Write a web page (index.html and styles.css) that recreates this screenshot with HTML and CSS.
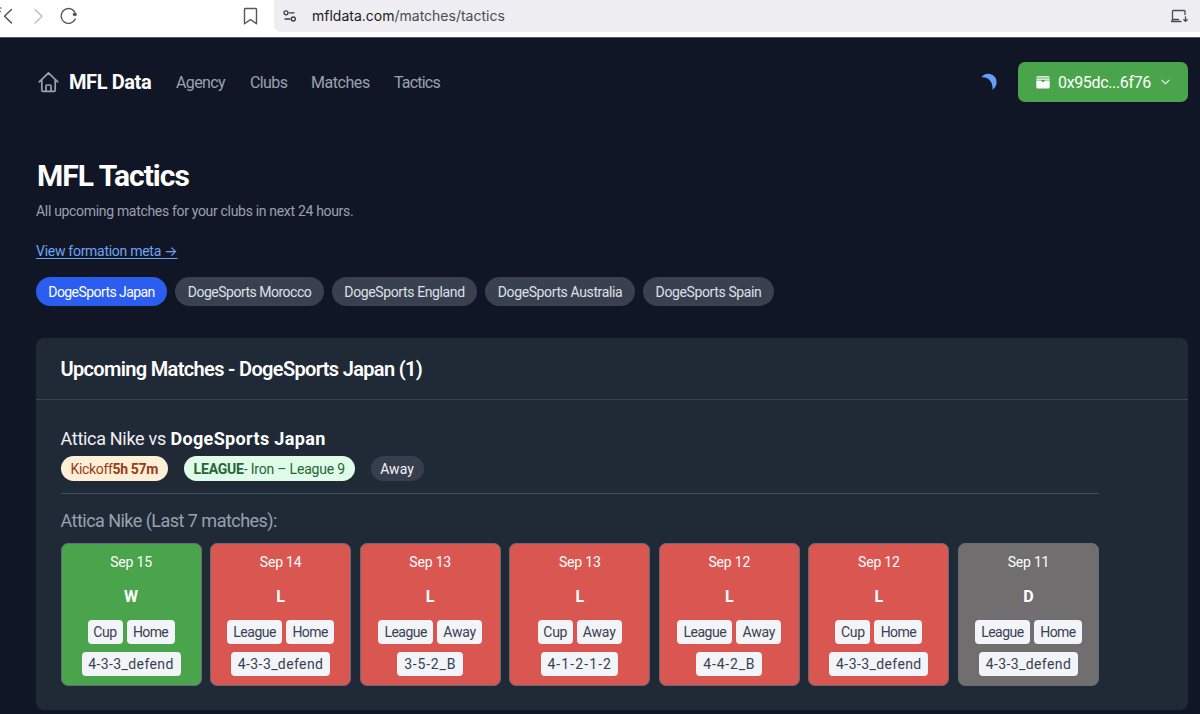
FILE: index.html
```html
<!DOCTYPE html>
<html lang="en">
<head>
<meta charset="utf-8">
<title>MFL Data</title>
<link rel="stylesheet" href="styles.css">
</head>
<body>
<div class="browser">
  <div class="browser-left">
    <svg class="tools" width="274" height="37" viewBox="0 0 274 37" fill="none" stroke-linecap="round" stroke-linejoin="round" stroke-width="1.4">
      <path d="M0 8h1M0 11.500h.5" stroke="#777"/>
      <path d="M11.500 9.500L4.500 16.300l7 6.700" stroke="#4d4d52"/>
      <path d="M35 9.500l7 6.800-7 6.700" stroke="#bdbdc0"/>
      <path d="M74.500 11.500a7.400 7.400 0 1 0 .8 7.500" stroke="#55555a"/>
      <circle cx="74.800" cy="14.300" r="2" fill="#55555a"/>
      <path d="M245 8.500h11q.5 0 .5 1v14.300l-6-4.300-6 4.300V9.500q0-1 .5-1z" stroke="#55555a"/>
    </svg>
  </div>
  <div class="address">
    <svg width="14" height="14" viewBox="0 0 14 14" fill="none" stroke="#3c3c43" stroke-width="1.300" stroke-linecap="round"><circle cx="3" cy="3.800" r="2"/><path d="M6.500 3.800H11M2 10H7"/><circle cx="10.300" cy="10" r="2"/></svg>
    <div class="url">mfldata.com<span>/matches/tactics</span></div>
    <svg class="install" width="18" height="14" viewBox="0 0 18 14" fill="none" stroke="#4a4a50" stroke-width="1.300" stroke-linecap="round" stroke-linejoin="round"><path d="M15 5.500V2.300q0-.8-.8-.8H3.300q-.8 0-.8.800V10.500L1.500 12.500H11M2.500 10.500h6"/><path d="M15.500 8v4M13.800 10.700l1.700 1.700 1.700-1.700"/></svg>
  </div>
</div>
<nav class="nav">
  <svg class="home" width="22" height="22" viewBox="0 0 22 22" fill="none" stroke="#99a1af" stroke-width="1.700" stroke-linecap="round" stroke-linejoin="round"><path d="M2.300 10.800L11.500 1.800l9.200 9M4.800 8.800v10.500q0 1 1 1h11.400q1 0 1-1V8.800M9 20v-5q0-1 1-1h3q1 0 1 1V20"/></svg>
  <div class="brand">MFL Data</div>
  <div class="link agency">Agency</div>
  <div class="link clubs">Clubs</div>
  <div class="link matches">Matches</div>
  <div class="link tactics">Tactics</div>
  <svg class="moon" width="16" height="18" viewBox="0 0 16 18"><path d="M.3 4.300C2.300 1.800 4.500.7 7.300.7c4.700 0 8.300 3.800 8.300 8.300 0 3.300-1.500 5.900-4.200 7.700C12.500 10 8 3.400.3 4.300z" fill="#659eff"/></svg>
  <div class="wallet">
    <svg width="14" height="13" viewBox="0 0 14 13"><path d="M1.500.3h11q1 0 1.200 1.200H.3Q.5.300 1.500.3zM.3 2.400h13.400v1.300H.3zM.3 4.600h4.700l1.500 1.500h1l1.500-1.500h4.700v6.400q0 1.600-1.600 1.600H1.900Q.3 12.600.3 11z" fill="#fff"/></svg>
    <div class="wallet-id">0x95dc...6f76</div>
    <svg width="9" height="6" viewBox="0 0 9 6" fill="none" stroke="#e3f2e2" stroke-width="1.100"><path d="M.7 1l3.800 3.700L8.300 1"/></svg>
  </div>
</nav>
<main class="page">
  <h1>MFL Tactics</h1>
  <p class="intro">All upcoming matches for your clubs in next 24 hours.</p>
  <a class="meta">View formation meta <span>→</span></a>
  <div class="clubs-list">
    <div class="pill active japan">DogeSports Japan</div>
    <div class="pill morocco">DogeSports Morocco</div>
    <div class="pill england">DogeSports England</div>
    <div class="pill australia">DogeSports Australia</div>
    <div class="pill spain">DogeSports Spain</div>
  </div>
  <section class="panel">
    <h2>Upcoming Matches - DogeSports Japan (1)</h2>
    <div class="match">
      <div class="versus"><span>Attica Nike vs</span> <b>DogeSports Japan</b></div>
      <div class="badges">
        <div class="badge kickoff">Kickoff<b>5h 57m</b></div>
        <div class="badge league"><b>LEAGUE</b>- Iron – League 9</div>
        <div class="badge away">Away</div>
      </div>
      <div class="recent">Attica Nike (Last 7 matches):</div>
      <div class="results">
        <div class="result win"><div>Sep 15</div><b>W</b><div class="chips"><i class="cup">Cup</i><i class="hm">Home</i></div><i class="f-long">4-3-3_defend</i></div>
        <div class="result loss"><div>Sep 14</div><b>L</b><div class="chips"><i class="lg">League</i><i class="hm">Home</i></div><i class="f-long">4-3-3_defend</i></div>
        <div class="result loss"><div>Sep 13</div><b>L</b><div class="chips"><i class="lg">League</i><i class="aw">Away</i></div><i class="f-short">3-5-2_B</i></div>
        <div class="result loss"><div>Sep 13</div><b>L</b><div class="chips"><i class="cup">Cup</i><i class="aw">Away</i></div><i class="f-mid">4-1-2-1-2</i></div>
        <div class="result loss"><div>Sep 12</div><b>L</b><div class="chips"><i class="lg">League</i><i class="aw">Away</i></div><i class="f-short">4-4-2_B</i></div>
        <div class="result loss"><div>Sep 12</div><b>L</b><div class="chips"><i class="cup">Cup</i><i class="hm">Home</i></div><i class="f-long">4-3-3_defend</i></div>
        <div class="result draw"><div>Sep 11</div><b>D</b><div class="chips"><i class="lg">League</i><i class="hm">Home</i></div><i class="f-long">4-3-3_defend</i></div>
      </div>
    </div>
  </section>
</main>
</body>
</html>
```
FILE: styles.css
```css
* { box-sizing: border-box; }
body { margin: 0; height: 714px; overflow: hidden; background: #111626; color: #fff; font-family: Roboto, "Open Sans", sans-serif; font-size: 14px; white-space: nowrap; }
svg { display: block; flex: none; }
.browser { display: flex; height: 38px; background: #fff; border-bottom: 1px solid #555965; }
.browser-left { width: 274px; }
.address { display: flex; flex: 1; align-items: center; height: 32px; padding: 0 12px 0 9px; background: #eeedf2; border-radius: 0 0 0 7px; }
.url { margin-left: 15px; padding-bottom: 1px; color: #1c1c20; font: 14px Inter, sans-serif; }
.url span { color: #4b4b52; }
.install { margin-left: auto; }
.nav { display: flex; align-items: center; height: 88px; padding: 0 12px 0 37px; color: #99a1af; font-size: 16px; }
.brand { width: 107px; padding-left: 10px; color: #fff; font-size: 20px; font-weight: 700; letter-spacing: -0.4px; }
.agency { width: 74px; margin-left: 10px; letter-spacing: -0.6px; }
.clubs { width: 61px; letter-spacing: -0.6px; }
.matches { width: 83px; letter-spacing: -0.45px; }
.tactics { width: 50px; letter-spacing: -0.8px; }
.moon { margin-left: auto; }
.wallet { display: flex; align-items: center; width: 170px; height: 40px; margin-left: 21px; padding-left: 18px; border-radius: 7px; background: #4aa44b; color: #fff; }
.wallet-id { width: 111px; padding-left: 8px; letter-spacing: -0.35px; }
.page { padding: 30px 12px 0 36px; }
h1 { margin: 0; height: 40px; font-size: 30px; line-height: 40px; letter-spacing: -1px; padding-left: 1px; }
.intro { margin: 5px 0 0; height: 20px; line-height: 20px; color: #99a1af; letter-spacing: -0.32px; }
.meta { display: block; height: 20px; margin: 20px 0 16px; line-height: 20px; letter-spacing: -0.28px; color: #6fa3f3; text-decoration: underline; text-underline-offset: 1.5px; text-decoration-skip-ink: none; }
.meta span { font-family: Inter, sans-serif; letter-spacing: 0; }
.clubs-list { display: flex; gap: 8px; }
.pill { display: flex; align-items: center; justify-content: center; height: 29px; border-radius: 15px; background: #394050; color: #dce0e7; letter-spacing: -0.38px; }
.active { background: #2b5ef0; color: #fff; }
.japan { width: 131px; letter-spacing: -0.57px; }
.morocco { width: 149px; letter-spacing: -0.5px; }
.england { width: 145px; }
.australia { width: 150px; }
.spain { width: 131px; }
.panel { height: 372px; margin-top: 32px; border-radius: 8px; background: #202a36; }
h2 { margin: 0; height: 62px; padding-left: 24.5px; border-bottom: 1px solid #36424e; font-size: 20px; font-weight: 600; line-height: 62px; letter-spacing: -0.66px; }
.match { width: 1063px; padding: 25px 0 0 24.5px; }
.versus { height: 28px; font-size: 18px; line-height: 28px; }
.versus span { color: #eef0f4; letter-spacing: -0.3px; }
.versus b { letter-spacing: 0.35px; }
.badges { display: flex; gap: 16px; height: 41px; padding-top: 3px; border-bottom: 1px solid #435060; }
.badge { display: flex; align-items: center; justify-content: center; height: 25px; border-radius: 13px; }
.kickoff { width: 107.5px; background: #ffefd7; color: #963c18; letter-spacing: -0.35px; }
.league { width: 170.5px; background: #defce7; color: #28633a; letter-spacing: -0.2px; }
.away { width: 53px; background: #373e50; color: #f3f4f6; }
.recent { margin: 13px 0 8px; height: 28px; line-height: 28px; color: #99a1af; font-size: 18px; letter-spacing: -0.53px; }
.results { display: grid; grid-template-columns: repeat(7, 1fr); gap: 8.500px; }
.result { display: flex; flex-direction: column; align-items: center; height: 143px; padding-top: 8px; border: 1px solid #646b78; border-radius: 7px; }
.result > div:first-child { height: 21px; line-height: 21px; letter-spacing: -0.2px; }
.result > b { height: 24px; margin: 12px 0 11px; font-size: 16px; line-height: 24px; }
.win { background: #4aa44b; }
.loss { background: #da5650; }
.draw { background: #706e6e; }
.chips { display: flex; gap: 4px; margin-bottom: 8px; }
i { height: 24px; border-radius: 4px; background: #f3f4f7; color: #364153; font-style: normal; line-height: 25px; text-align: center; }
.cup { width: 35px; letter-spacing: -0.3px; }
.lg { width: 55px; letter-spacing: -0.5px; }
.hm { width: 48px; letter-spacing: -0.6px; }
.aw { width: 45px; letter-spacing: -0.2px; }
.f-long { width: 99px; letter-spacing: 0.4px; }
.f-mid { width: 77px; letter-spacing: 1.1px; }
.f-short { width: 66px; letter-spacing: 0.8px; }
```
